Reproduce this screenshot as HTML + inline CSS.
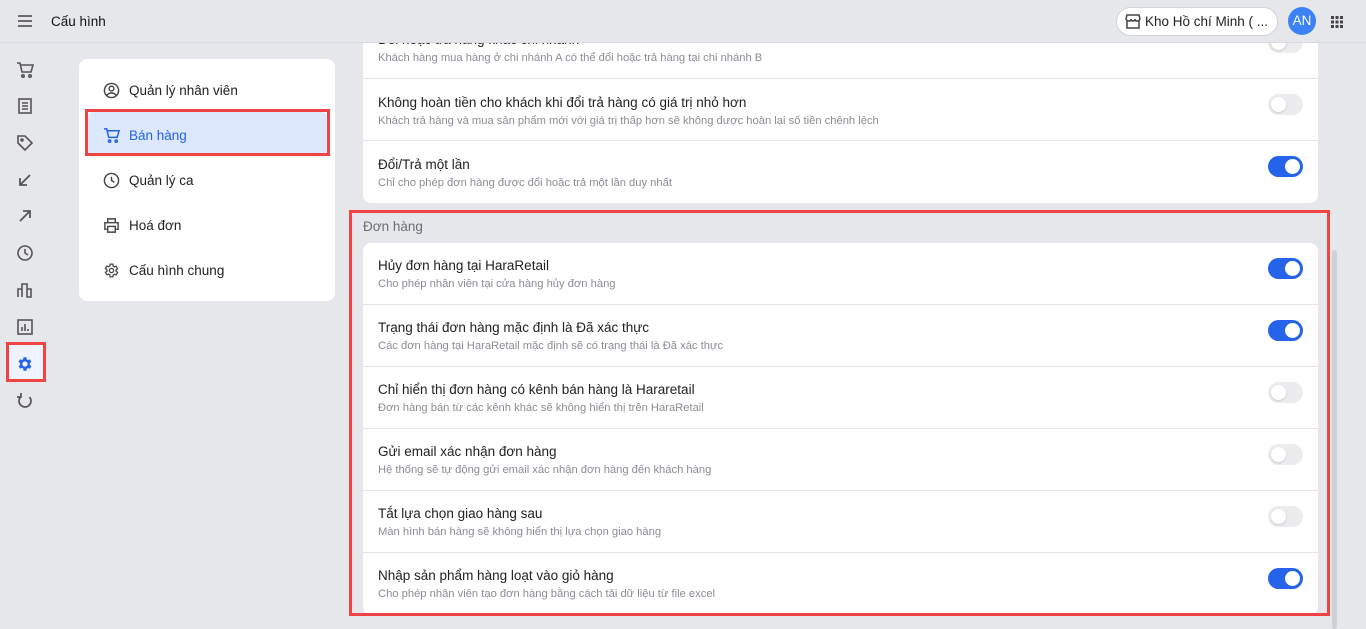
<!DOCTYPE html><html><head><meta charset="utf-8"><style>
*{box-sizing:border-box;margin:0;padding:0}
body{width:1366px;height:629px;overflow:hidden;background:#e6e7eb;font-family:"Liberation Sans",sans-serif;position:relative;color:#1f2328}
.hdr{position:absolute;left:0;top:0;width:1366px;height:43px;background:#e6e7eb;border-bottom:1px solid #dadbe0;z-index:5}
.abs{position:absolute}
.ic{position:absolute;left:16px;width:18px;height:18px}
.menu{position:absolute;left:79px;top:59px;width:256px;height:242px;background:#fff;border-radius:8px}
.mi{position:absolute;left:24px;font-size:13.5px;color:#222}
.mi svg{position:absolute;left:0;top:0}
.mi span{position:absolute;left:26px;top:1px;white-space:nowrap}
.card{position:absolute;left:363px;width:955px;background:#fff;border-radius:8px}
.row{position:relative;height:62px;border-bottom:1px solid #e5e5e8}
.row:last-child{border-bottom:none}
.t{position:absolute;left:15px;top:15px;font-size:13.5px;color:#222;white-space:nowrap}
.d{position:absolute;left:15px;top:35px;font-size:11.2px;color:#8a8d94;white-space:nowrap}
.tg{position:absolute;left:905px;top:15px;width:35px;height:21px;border-radius:11px;background:#ececee}
.tg::after{content:"";position:absolute;left:3px;top:3px;width:15px;height:15px;border-radius:50%;background:#fff;box-shadow:0 1px 2px rgba(0,0,0,.15)}
.tg.on{background:#2563eb}.tg.on::after{left:17px;box-shadow:none}
.red{position:absolute;border:3px solid #f04343}
</style></head><body>
<div class="hdr">
<svg class="abs" style="left:17px;top:14px" width="16" height="14" viewBox="0 0 16 14"><path d="M1 2h14M1 7h14M1 12h14" stroke="#444" stroke-width="1.6"/></svg>
<div class="abs" style="left:51px;top:14px;font-size:13.5px;color:#111">Cấu hình</div>
<div class="abs" style="left:1116px;top:7px;width:162px;height:29px;border:1px solid #d2d4d9;border-radius:15px;background:#fff"></div>
<svg class="abs" style="left:1125px;top:14px" width="16" height="15" viewBox="0 0 16 15"><path d="M2 1h12l1 4q-1 2-3 2-2 0-2-2 0 2-2 2-2 0-2-2 0 2-2 2-2 0-3-2zM2 7v7h12V7" fill="none" stroke="#444" stroke-width="1.5"/></svg>
<div class="abs" style="left:1145px;top:14px;font-size:13.5px;color:#222">Kho Hồ chí Minh ( ...</div>
<div class="abs" style="left:1288px;top:7px;width:28px;height:28px;border-radius:50%;background:#3b82f6;color:#fff;font-size:13.5px;text-align:center;line-height:28px">AN</div>
<svg class="abs" style="left:1331px;top:16px" width="12" height="12" viewBox="0 0 12 12" fill="#444"><rect x="0" y="0" width="3" height="3"/><rect x="4.5" y="0" width="3" height="3"/><rect x="9" y="0" width="3" height="3"/><rect x="0" y="4.5" width="3" height="3"/><rect x="4.5" y="4.5" width="3" height="3"/><rect x="9" y="4.5" width="3" height="3"/><rect x="0" y="9" width="3" height="3"/><rect x="4.5" y="9" width="3" height="3"/><rect x="9" y="9" width="3" height="3"/></svg>
</div>
<svg class="ic" style="top:61px" viewBox="0 0 18 18" fill="none" stroke="#555" stroke-width="1.6"><path d="M1 2h3l2 9h9l2-7H5"/><circle cx="7" cy="15" r="1.2"/><circle cx="14" cy="15" r="1.2"/></svg>
<svg class="ic" style="top:97px" viewBox="0 0 18 18" fill="none" stroke="#555" stroke-width="1.6"><rect x="3" y="2" width="12" height="14"/><path d="M6 6h6M6 9h6M6 12h6"/></svg>
<svg class="ic" style="top:134px" viewBox="0 0 18 18" fill="none" stroke="#555" stroke-width="1.6"><path d="M2 2h7l7 7-7 7-7-7z"/><circle cx="6" cy="6" r="1"/></svg>
<svg class="ic" style="top:171px" viewBox="0 0 18 18" fill="none" stroke="#555" stroke-width="1.8"><path d="M14 4L4 14M4 7v7h7"/></svg>
<svg class="ic" style="top:207px" viewBox="0 0 18 18" fill="none" stroke="#555" stroke-width="1.8"><path d="M4 14L14 4M7 4h7v7"/></svg>
<svg class="ic" style="top:244px" viewBox="0 0 18 18" fill="none" stroke="#555" stroke-width="1.6"><circle cx="9" cy="9" r="7"/><path d="M9 5v4l3 2"/></svg>
<svg class="ic" style="top:281px" viewBox="0 0 18 18" fill="none" stroke="#555" stroke-width="1.6"><path d="M2 16V8h4v8M6 16V3h5v13M11 16V8h4v8z"/></svg>
<svg class="ic" style="top:318px" viewBox="0 0 18 18" fill="none" stroke="#555" stroke-width="1.6"><rect x="2" y="2" width="14" height="14"/><path d="M6 13V9M9 13V6M12 13v-2"/></svg>
<div class="abs" style="left:9px;top:345px;width:34px;height:34px;background:#eef3ff"></div>
<svg class="ic" style="top:355px" viewBox="0 0 24 24" fill="#2563eb"><path d="M19.4 13a7.5 7.5 0 000-2l2.1-1.6-2-3.5-2.5 1a7 7 0 00-1.7-1L15 3h-4l-.4 2.7a7 7 0 00-1.7 1l-2.5-1-2 3.5L6.6 11a7.5 7.5 0 000 2l-2.1 1.6 2 3.5 2.5-1a7 7 0 001.7 1L11 21h4l.4-2.7a7 7 0 001.7-1l2.5 1 2-3.5zM13 15.5a3.5 3.5 0 110-7 3.5 3.5 0 010 7z" transform="translate(-1 0)"/></svg>
<svg class="ic" style="top:392px" viewBox="0 0 18 18" fill="none" stroke="#555" stroke-width="1.7"><path d="M13.5 5A6 6 0 1 1 5 4.5M5 1v4H1"/></svg>
<div class="red" style="left:6px;top:342px;width:40px;height:40px"></div>
<div class="menu">
<div class="mi" style="top:23px"><svg width="17" height="17" viewBox="0 0 18 18" fill="none" stroke="#444" stroke-width="1.5"><circle cx="9" cy="9" r="7.5"/><circle cx="9" cy="7" r="2.5"/><path d="M4 14q5-5 10 0"/></svg><span>Quản lý nhân viên</span></div>
<div class="abs" style="left:9px;top:53px;width:239px;height:44px;background:#dbe8fd;border-radius:6px"></div>
<div class="mi" style="top:68px;color:#2563eb"><svg width="17" height="17" viewBox="0 0 18 18" fill="none" stroke="#2563eb" stroke-width="1.6"><path d="M1 2h3l2 9h9l2-7H5"/><circle cx="7" cy="15" r="1.2"/><circle cx="14" cy="15" r="1.2"/></svg><span style="color:#2563eb">Bán hàng</span></div>
<div class="mi" style="top:113px"><svg width="17" height="17" viewBox="0 0 18 18" fill="none" stroke="#444" stroke-width="1.5"><circle cx="9" cy="9" r="7.5"/><path d="M9 5v4l3 2"/></svg><span>Quản lý ca</span></div>
<div class="mi" style="top:158px"><svg width="17" height="17" viewBox="0 0 18 18" fill="none" stroke="#444" stroke-width="1.5"><path d="M5 6V2h8v4M4 13H2V6h14v7h-2M5 10h8v6H5z"/></svg><span>Hoá đơn</span></div>
<div class="mi" style="top:203px"><svg width="17" height="17" viewBox="0 0 24 24" fill="none" stroke="#444" stroke-width="1.8"><path d="M19.4 13a7.5 7.5 0 000-2l2.1-1.6-2-3.5-2.5 1a7 7 0 00-1.7-1L15 3h-4l-.4 2.7a7 7 0 00-1.7 1l-2.5-1-2 3.5L6.6 11a7.5 7.5 0 000 2l-2.1 1.6 2 3.5 2.5-1a7 7 0 001.7 1L11 21h4l.4-2.7a7 7 0 001.7-1l2.5 1 2-3.5z" transform="translate(-1 0)"/><circle cx="12" cy="12" r="3"/></svg><span>Cấu hình chung</span></div>
</div>
<div class="red" style="left:85px;top:109px;width:245px;height:47px"></div>
<div class="card" style="top:17px;height:186px">
<div class="row"><div class="t">Đổi hoặc trả hàng khác chi nhánh</div><div class="d">Khách hàng mua hàng ở chi nhánh A có thể đổi hoặc trả hàng tại chi nhánh B</div><div class="tg"></div></div>
<div class="row"><div class="t" style="top:16px">Không hoàn tiền cho khách khi đổi trả hàng có giá trị nhỏ hơn</div><div class="d" style="top:36px">Khách trả hàng và mua sản phẩm mới với giá trị thấp hơn sẽ không được hoàn lại số tiền chênh lệch</div><div class="tg"></div></div>
<div class="row"><div class="t" style="top:16px">Đổi/Trả một lần</div><div class="d" style="top:36px">Chỉ cho phép đơn hàng được đổi hoặc trả một lần duy nhất</div><div class="tg on"></div></div>
</div>
<div class="abs" style="left:363px;top:219px;font-size:13.5px;color:#6b6e75">Đơn hàng</div>
<div class="card" style="top:243px;height:372px">
<div class="row"><div class="t">Hủy đơn hàng tại HaraRetail</div><div class="d">Cho phép nhân viên tại cửa hàng hủy đơn hàng</div><div class="tg on"></div></div>
<div class="row"><div class="t">Trạng thái đơn hàng mặc định là Đã xác thực</div><div class="d">Các đơn hàng tại HaraRetail mặc định sẽ có trạng thái là Đã xác thực</div><div class="tg on"></div></div>
<div class="row"><div class="t">Chỉ hiển thị đơn hàng có kênh bán hàng là Hararetail</div><div class="d">Đơn hàng bán từ các kênh khác sẽ không hiển thị trên HaraRetail</div><div class="tg"></div></div>
<div class="row"><div class="t">Gửi email xác nhận đơn hàng</div><div class="d">Hệ thống sẽ tự động gửi email xác nhận đơn hàng đến khách hàng</div><div class="tg"></div></div>
<div class="row"><div class="t">Tắt lựa chọn giao hàng sau</div><div class="d">Màn hình bán hàng sẽ không hiển thị lựa chọn giao hàng</div><div class="tg"></div></div>
<div class="row"><div class="t">Nhập sản phẩm hàng loạt vào giỏ hàng</div><div class="d">Cho phép nhân viên tạo đơn hàng bằng cách tải dữ liệu từ file excel</div><div class="tg on"></div></div>
</div>
<div class="red" style="left:349px;top:210px;width:981px;height:406px"></div>
<div class="abs" style="left:1332px;top:250px;width:5px;height:379px;background:#cfd0d4;border-radius:3px"></div>
</body></html>
